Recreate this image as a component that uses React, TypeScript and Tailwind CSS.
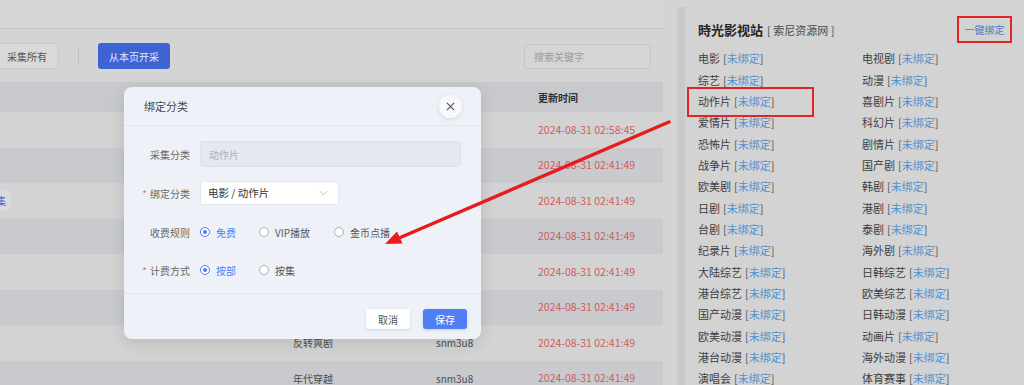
import React from "react"

const cats: [string, string][] = [
  ["电影", "电视剧"],
  ["综艺", "动漫"],
  ["动作片", "喜剧片"],
  ["爱情片", "科幻片"],
  ["恐怖片", "剧情片"],
  ["战争片", "国产剧"],
  ["欧美剧", "韩剧"],
  ["日剧", "港剧"],
  ["台剧", "泰剧"],
  ["纪录片", "海外剧"],
  ["大陆综艺", "日韩综艺"],
  ["港台综艺", "欧美综艺"],
  ["国产动漫", "日韩动漫"],
  ["欧美动漫", "动画片"],
  ["港台动漫", "海外动漫"],
  ["演唱会", "体育赛事"],
]

// 前六行的分类/来源被弹窗挡住，这里留空
const rows = [
  { name: "", from: "", time: "2024-08-31 02:58:45" },
  { name: "", from: "", time: "2024-08-31 02:41:49" },
  { name: "", from: "", time: "2024-08-31 02:41:49" },
  { name: "", from: "", time: "2024-08-31 02:41:49" },
  { name: "", from: "", time: "2024-08-31 02:41:49" },
  { name: "", from: "", time: "2024-08-31 02:41:49" },
  { name: "反转爽剧", from: "snm3u8", time: "2024-08-31 02:41:49" },
  { name: "年代穿越", from: "snm3u8", time: "2024-08-31 02:41:49" },
]

function Radio({ checked, label, w }: { checked?: boolean; label: string; w: string }) {
  return (
    <div className={`flex items-center ${w}`}>
      <span
        className={`flex items-center justify-center w-[10px] h-[10px] rounded-full border bg-white ${
          checked ? "border-[#4d7cf6]" : "border-[#a9adb5]"
        }`}
      >
        {checked && <span className="w-[4px] h-[4px] rounded-full bg-[#4d7cf6]" />}
      </span>
      <span className={`ml-[6px] ${checked ? "text-[#4d7cf6]" : "text-[#555]"}`}>{label}</span>
    </div>
  )
}

function Label({ text, required }: { text: string; required?: boolean }) {
  return (
    <div className="w-[66px] shrink-0 flex justify-end items-center text-[#666]">
      {required && <span className="text-[#f06b6b] mr-[3px]">*</span>}
      {text}
    </div>
  )
}

function BindModal() {
  return (
    <div className="absolute left-[124px] top-[87px] w-[357px] h-[252px] rounded-[8px] bg-[#eef2f8] shadow-[0_4px_16px_rgba(0,0,0,0.12)] z-10 flex flex-col text-[10px]">
      <div className="h-[39px] shrink-0 flex items-center justify-between pl-[20px] pr-[19px] border-b border-[#dfe6ef]">
        <span className="text-[11px] text-[#4a4a4a]">绑定分类</span>
        <button className="w-[23px] h-[23px] rounded-full bg-[#f7f9fc] shadow-[0_1px_4px_rgba(0,0,0,0.12)] flex items-center justify-center text-[#555]">
          <svg width="9" height="9" viewBox="0 0 10 10" fill="none" stroke="currentColor" strokeWidth="1.3">
            <path d="M1 1L9 9M9 1L1 9" />
          </svg>
        </button>
      </div>
      <div className="flex-1 flex flex-col pt-[15px] pb-[11px] border-b border-[#dfe6ef]">
        <div className="flex h-[26px]">
          <Label text="采集分类" />
          <div className="ml-[10px] w-[261px] h-full rounded-[3px] bg-[#e5e8ee] border border-[#dde2ea] flex items-center pl-[8px] text-[#aab0bb]">
            动作片
          </div>
        </div>
        <div className="flex h-[24px] mt-[14px]">
          <Label text="绑定分类" required />
          <div className="ml-[10px] w-[139px] h-full rounded-[3px] bg-white border border-[#e4e8ee] flex items-center justify-between pl-[7px] pr-[10px] text-[10.5px] text-[#333]">
            <span>电影 / 动作片</span>
            <svg width="9" height="6" viewBox="0 0 10 6" fill="none" stroke="#bbb" strokeWidth="1">
              <path d="M1 1L5 5L9 1" />
            </svg>
          </div>
        </div>
        <div className="flex h-[24px] mt-[15px] items-center">
          <Label text="收费规则" />
          <div className="ml-[10px] flex items-center">
            <Radio checked label="免费" w="w-[59px]" />
            <Radio label="VIP播放" w="w-[75px]" />
            <Radio label="金币点播" w="w-[60px]" />
          </div>
        </div>
        <div className="flex h-[24px] mt-[14px] items-center">
          <Label text="计费方式" required />
          <div className="ml-[10px] flex items-center">
            <Radio checked label="按部" w="w-[59px]" />
            <Radio label="按集" w="w-[60px]" />
          </div>
        </div>
      </div>
      <div className="flex justify-end gap-[13px] pr-[14px] pt-[15px] pb-[11px]">
        <button className="w-[44px] h-[20px] rounded-[3px] bg-white text-[#555] shadow-[0_1px_3px_rgba(0,0,0,0.12)]">取消</button>
        <button className="w-[44px] h-[20px] rounded-[3px] bg-[#4f7ef5] text-white shadow-[0_1px_3px_rgba(0,0,0,0.15)]">保存</button>
      </div>
    </div>
  )
}

export default function App() {
  return (
    <div className="relative w-[1024px] h-[385px] overflow-hidden bg-[#d4d4d4] flex font-['Noto_Sans_CJK_SC','Noto_Sans',sans-serif]">
      {/* 左侧：采集列表（带遮罩） */}
      <div className="w-[663px] shrink-0 flex flex-col text-[10px]">
        <div className="h-[29px] shrink-0 border-b border-[#c7c7c7] bg-[#d6d6d6]" />
        <div className="h-[26px] mt-[14px] shrink-0 flex items-center">
          <button className="-ml-[5px] h-full px-[11px] rounded-[3px] bg-[#d9d9d9] border border-[#cbcbcb] text-[#555]">
            采集所有
          </button>
          <span className="ml-[19px] w-px h-[20px] bg-[#c3c3c3]" />
          <button className="ml-[19px] h-full w-[72px] rounded-[3px] bg-[#3e64d3] text-[#e4e8f3]">从本页开采</button>
          <div className="ml-auto mr-[12px] w-[127px] h-[25px] rounded-[3px] border border-[#c6c6c6] bg-[#d5d5d5] flex items-center pl-[9px] text-[#9a9a9a]">
            搜索关键字
          </div>
        </div>
        <div className="mt-[13px] h-[30px] shrink-0 grid grid-cols-[293px_143px_102px_1fr] items-center bg-[#c8c9cc] text-[#2f2f2f] font-bold">
          <span />
          <span />
          <span />
          <span>更新时间</span>
        </div>
        {rows.map((r, i) => (
          <div
            key={i}
            className={`h-[35.5px] shrink-0 grid grid-cols-[293px_143px_102px_1fr] items-center text-[#4d4d4d] ${
              i % 2 === 1 ? "bg-[#c9cacd]" : "bg-[#d3d3d3]"
            }`}
          >
            <span className="flex">
              {i === 2 && (
                <span className="-ml-[18px] px-[4px] py-[3px] rounded-[2px] bg-[#d8dae0] text-[#3a66d8]">采集</span>
              )}
            </span>
            <span>{r.name}</span>
            <span>{r.from}</span>
            <span className="text-[10.5px] text-[#d05c5c]">{r.time}</span>
          </div>
        ))}
      </div>

      <div className="w-[14px] shrink-0" />
      <div className="w-[8px] shrink-0 mt-[7px] bg-[#c9c9c9]" />

      {/* 右侧：站点分类绑定 */}
      <div className="flex-1 flex flex-col pl-[13px] pr-[12px] pt-[16px] bg-[#d3d3d3]">
        <div className="h-[27px] shrink-0 flex items-center justify-between">
          <div className="flex items-baseline">
            <span className="text-[13px] font-bold text-[#262626]">時光影视站</span>
            <span className="ml-[4px] text-[11px] text-[#4a4a4a]">[ 索尼资源网 ]</span>
          </div>
          <div className="w-[55px] h-[27px] border-2 border-[#e32424] flex items-center justify-center text-[10px] text-[#4a78c8]">
            一键绑定
          </div>
        </div>
        <div className="mt-[5px] grid grid-cols-[164px_1fr] auto-rows-[21.33px] text-[11px]">
          {cats.flatMap(([a, b], i) =>
            [a, b].map((name, j) => (
              <div key={`${i}-${j}`} className="relative flex items-center text-[#3f3f3f]">
                <span>{name}</span>
                <span className="ml-[3px] text-[#555]">[</span>
                <span className="text-[#5590cf]">未绑定</span>
                <span className="text-[#555]">]</span>
                {i === 2 && j === 0 && (
                  <span className="absolute -left-[11px] -top-[4px] w-[127px] h-[30px] border-2 border-[#e32424]" />
                )}
              </div>
            ))
          )}
        </div>
      </div>

      <BindModal />

      {/* 红色箭头 */}
      <svg className="absolute inset-0 z-20 pointer-events-none" width="1024" height="385">
        <line x1="669" y1="122" x2="398" y2="238.5" stroke="#e81c1c" strokeWidth="3.5" strokeLinecap="round" />
        <polygon points="385,244 402.5,243.5 397,231.5" fill="#e81c1c" />
      </svg>
    </div>
  )
}
